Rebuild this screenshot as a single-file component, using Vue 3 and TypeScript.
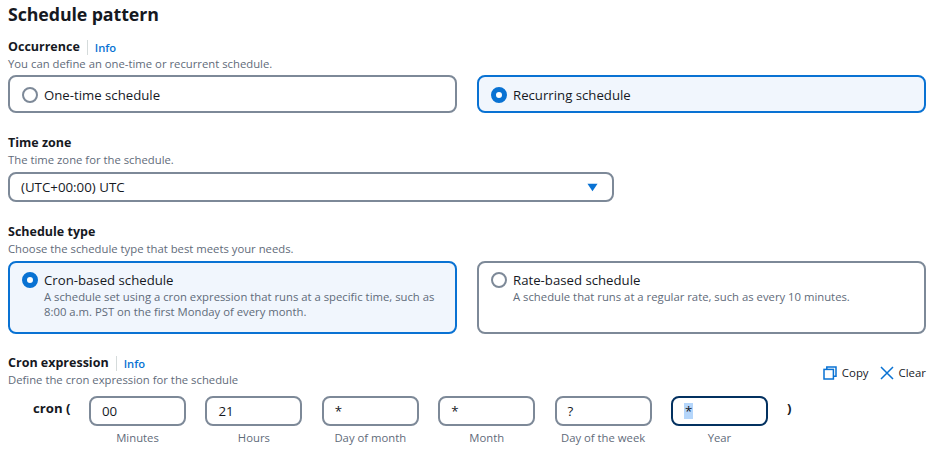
<script setup lang="ts">
const fields = [
  { value: '00', label: 'Minutes' },
  { value: '21', label: 'Hours' },
  { value: '*', label: 'Day of month' },
  { value: '*', label: 'Month' },
  { value: '?', label: 'Day of the week' },
]
</script>

<template>
  <main class="page">
    <h2 class="title">Schedule pattern</h2>

    <section class="occurrence">
      <div class="label-row">
        <span class="label">Occurrence</span>
        <span class="divider"></span>
        <a class="info">Info</a>
      </div>
      <p class="desc">You can define an one-time or recurrent schedule.</p>
      <div class="cards short">
        <div class="card">
          <span class="radio"></span>
          <span class="card-title">One-time schedule</span>
        </div>
        <div class="card active">
          <span class="radio on"></span>
          <span class="card-title">Recurring schedule</span>
        </div>
      </div>
    </section>

    <section class="zone">
      <div class="label">Time zone</div>
      <p class="desc">The time zone for the schedule.</p>
      <div class="select">
        <span>(UTC+00:00) UTC</span>
        <svg class="caret" width="11" height="9" viewBox="0 0 12 9"><path d="M0.5 0.5h11L6 8.5z" fill="#0972d3" /></svg>
      </div>
    </section>

    <section class="type">
      <div class="label">Schedule type</div>
      <p class="desc">Choose the schedule type that best meets your needs.</p>
      <div class="cards tall">
        <div class="card top active">
          <span class="radio on"></span>
          <div>
            <div class="card-title">Cron-based schedule</div>
            <div class="card-desc">A schedule set using a cron expression that runs at a specific time, such as<br />8:00 a.m. PST on the first Monday of every month.</div>
          </div>
        </div>
        <div class="card top">
          <span class="radio"></span>
          <div>
            <div class="card-title">Rate-based schedule</div>
            <div class="card-desc">A schedule that runs at a regular rate, such as every 10 minutes.</div>
          </div>
        </div>
      </div>
    </section>

    <section class="cron">
      <div class="cron-head">
        <div>
          <div class="label-row">
            <span class="label">Cron expression</span>
            <span class="divider"></span>
            <a class="info">Info</a>
          </div>
          <p class="desc">Define the cron expression for the schedule</p>
        </div>
        <div class="actions">
          <span class="action">
            <svg width="14" height="14" viewBox="0 0 14 14" fill="none" stroke="#0972d3" stroke-width="1.5">
              <rect x="1" y="3.4" width="9.4" height="9.6" />
              <path d="M3.8 3.2V1h9.2v9.2h-2.6" />
            </svg>
            Copy
          </span>
          <span class="action">
            <svg width="14" height="14" viewBox="0 0 14 14" fill="none" stroke="#0972d3" stroke-width="1.5">
              <path d="M1 1l12 12M13 1L1 13" />
            </svg>
            Clear
          </span>
        </div>
      </div>
      <div class="cron-row">
        <span class="paren open">cron (</span>
        <div v-for="f in fields" :key="f.label" class="field">
          <div class="input">{{ f.value }}</div>
          <div class="field-label">{{ f.label }}</div>
        </div>
        <div class="field">
          <div class="input focused"><span class="selection">*</span></div>
          <div class="field-label">Year</div>
        </div>
        <span class="paren close">)</span>
      </div>
    </section>
  </main>
</template>

<style>
html, body { margin: 0; background: #fff; }
</style>

<style scoped>
.page {
  box-sizing: border-box;
  width: 936px;
  height: 450px;
  padding: 3px 10px 0 8px;
  font-family: "Open Sans", "Noto Sans", sans-serif;
  color: #16191f;
  overflow: hidden;
}
.title {
  margin: 0;
  font-size: 17.8px;
  line-height: 22px;
  font-weight: 700;
  letter-spacing: -0.1px;
}
.occurrence { margin-top: 13px; }
.zone { margin-top: 21px; }
.type { margin-top: 21px; }
.cron { margin-top: 20px; }
.label-row { display: flex; align-items: center; height: 18px; }
.label {
  display: block;
  font-size: 12.5px;
  line-height: 18px;
  font-weight: 700;
}
.divider {
  width: 1px;
  height: 15px;
  background: #d5dbdb;
  margin: 0 7px;
}
.info {
  font-size: 11.2px;
  font-weight: 600;
  color: #0972d3;
}
.desc {
  margin: 0;
  font-size: 11.3px;
  line-height: 15px;
  color: #5f6b7a;
}
.occurrence .desc { margin-bottom: -1px; }
.cards {
  display: grid;
  grid-template-columns: 449px 449px;
  column-gap: 20px;
  margin-top: 5px;
}
.short { height: 38px; }
.tall { height: 73px; }
.card {
  box-sizing: border-box;
  display: flex;
  align-items: center;
  gap: 6px;
  padding: 0 12px;
  border: 2px solid #7d8998;
  border-radius: 8px;
  background: #fff;
}
.short .card { padding-top: 1px; }
.card.top { align-items: flex-start; padding-top: 9px; }
.card.active { border-color: #0972d3; background: #f1f6fd; }
.radio {
  box-sizing: border-box;
  flex: none;
  width: 16px;
  height: 16px;
  border: 2px solid #7d8998;
  border-radius: 50%;
  background: #fff;
}
.radio.on { border: 5px solid #0972d3; }
.card-title { font-size: 13.2px; line-height: 18px; }
.card.top .card-title { line-height: 17px; }
.card-desc {
  margin-top: 0;
  font-size: 11.3px;
  line-height: 15px;
  color: #5f6b7a;
  white-space: nowrap;
}
.select {
  box-sizing: border-box;
  display: flex;
  align-items: center;
  justify-content: space-between;
  width: 606px;
  height: 30px;
  margin-top: 5px;
  padding: 0 14px 0 11px;
  border: 2px solid #7d8998;
  border-radius: 8px;
  font-size: 13.3px;
}
.cron-head {
  display: flex;
  justify-content: space-between;
  align-items: flex-end;
}
.actions {
  display: flex;
  gap: 11px;
  padding-bottom: 7px;
}
.action {
  display: flex;
  align-items: center;
  gap: 5px;
  font-size: 11.4px;
  color: #16191f;
}
.cron-row {
  display: flex;
  align-items: flex-start;
  margin-top: 9px;
}
.paren {
  font-size: 13.2px;
  font-weight: 700;
  line-height: 24px;
}
.paren.open { margin-left: 25px; width: 56px; }
.paren.close { margin-left: 19px; }
.field {
  width: 97px;
  margin-right: 19.4px;
  text-align: center;
}
.field:nth-last-child(2) { margin-right: 0; }
.input {
  box-sizing: border-box;
  height: 30px;
  padding: 0 11px;
  border: 2px solid #7d8998;
  border-radius: 8px;
  font-size: 13.3px;
  line-height: 26px;
  text-align: left;
}
.input.focused { border-color: #033160; }
.selection { display: inline-block; padding: 0 1px; background: #b5d6fb; line-height: 16px; }
.field-label {
  margin-top: 4px;
  font-size: 11.3px;
  line-height: 15px;
  color: #5f6b7a;
}
</style>
